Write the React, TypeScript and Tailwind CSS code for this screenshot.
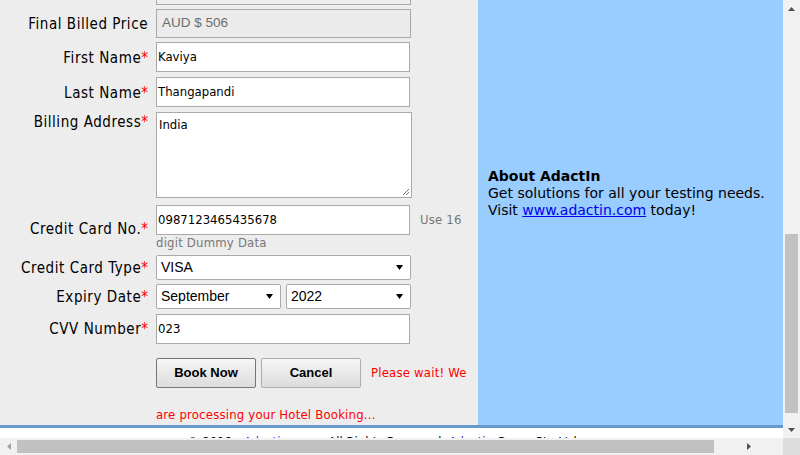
import React from "react";

const lbl = "font-['DejaVu_Sans_Condensed','DejaVu_Sans',sans-serif] text-[15px] tracking-[0.55px] text-black";
const val = "font-['DejaVu_Sans_Condensed','DejaVu_Sans',sans-serif] text-[13px] text-black";
const note = "font-['DejaVu_Sans_Condensed','DejaVu_Sans',sans-serif] text-[13px] tracking-[0.2px]";
const arial = "font-['Liberation_Sans',Arial,sans-serif]";

function Label({ text, req = true }: { text: string; req?: boolean }) {
  return (
    <span className={lbl}>
      {text}
      {req && <span className="text-[#ff0000] tracking-normal">*</span>}
    </span>
  );
}

function Caret() {
  return (
    <svg width="7" height="5" viewBox="0 0 7 5" className="shrink-0">
      <path d="M0 0H7L3.5 5Z" fill="#000" />
    </svg>
  );
}

function Select({ value, w }: { value: string; w: string }) {
  return (
    <div className={`${w} h-[25px] bg-white border border-[#a9a9a9] rounded-[2px] flex items-center pl-[4px] pr-[7px] justify-between`}>
      <span className={`${arial} text-[14px] text-black`}>{value}</span>
      <Caret />
    </div>
  );
}

function Input({ value }: { value: string }) {
  return (
    <div className="w-[254px] h-[30px] bg-white border border-[#a9a9a9] flex items-center pl-[1px]">
      <span className={val}>{value}</span>
    </div>
  );
}

export default function App() {
  return (
    <div className="w-[800px] h-[455px] overflow-hidden flex flex-col bg-white">
      <div className="flex h-[438px]">
        {/* page content */}
        <div className="w-[783px] flex flex-col overflow-hidden">
          <div className="flex h-[425px]">
            {/* left form */}
            <div className="w-[478px] bg-[#ededed] flex flex-col">
              <div className="flex">
                <div className="w-[148px]" />
                <div className="ml-[8px] w-[255px] h-[5px] border-x border-b border-[#a9a9a9]" />
              </div>

              <div className="flex items-center mt-[4px] h-[29px]">
                <div className="w-[148px] text-right">
                  <Label text="Final Billed Price" req={false} />
                </div>
                <div className="ml-[8px] w-[255px] h-[29px] bg-[#ebebeb] border border-[#a9a9a9] flex items-center pl-[5px]">
                  <span className={`${arial} text-[13.5px] text-[#6d6d6d]`}>AUD $ 506</span>
                </div>
              </div>

              <div className="flex items-center mt-[4px] h-[30px]">
                <div className="w-[148px] text-right"><Label text="First Name" /></div>
                <div className="ml-[8px]"><Input value="Kaviya" /></div>
              </div>

              <div className="flex items-center mt-[5px] h-[30px]">
                <div className="w-[148px] text-right"><Label text="Last Name" /></div>
                <div className="ml-[8px]"><Input value="Thangapandi" /></div>
              </div>

              <div className="flex items-start mt-[5px] h-[86px]">
                <div className="w-[148px] text-right leading-[18px]"><Label text="Billing Address" /></div>
                <div className={`ml-[8px] relative w-[256px] h-[86px] bg-white border border-[#a9a9a9] pl-[2px] pt-[4px] ${val} leading-[16px]`}>
                  India
                  <svg width="8" height="8" viewBox="0 0 8 8" className="absolute right-[1px] bottom-[1px]">
                    <path d="M7 1L1 7M7 4L4 7" stroke="#777" strokeWidth="1" />
                  </svg>
                </div>
              </div>

              <div className="flex items-center mt-[7px] h-[46px]">
                <div className="w-[148px] text-right"><Label text="Credit Card No." /></div>
                <div className="ml-[8px] flex flex-col h-[46px]">
                  <div className="flex items-center">
                    <Input value="0987123465435678" />
                    <span className={`${note} text-[#777] ml-[10px]`}>Use 16</span>
                  </div>
                  <span className={`${note} text-[#777] leading-[16px]`}>digit Dummy Data</span>
                </div>
              </div>

              <div className="flex items-center mt-[4px] h-[25px]">
                <div className="w-[148px] text-right"><Label text="Credit Card Type" /></div>
                <div className="ml-[8px]"><Select value="VISA" w="w-[255px]" /></div>
              </div>

              <div className="flex items-center mt-[4px] h-[25px]">
                <div className="w-[148px] text-right"><Label text="Expiry Date" /></div>
                <div className="ml-[8px] flex gap-[5px]">
                  <Select value="September" w="w-[125px]" />
                  <Select value="2022" w="w-[125px]" />
                </div>
              </div>

              <div className="flex items-center mt-[4px] h-[31px]">
                <div className="w-[148px] text-right"><Label text="CVV Number" /></div>
                <div className="ml-[8px]"><Input value="023" /></div>
              </div>

              <div className="flex flex-col mt-[14px] ml-[156px]">
                <div className="flex items-center h-[30px]">
                  <div className={`w-[100px] h-[30px] rounded-[2px] border border-[#767676] bg-gradient-to-b from-[#f6f6f6] to-[#dcdcdc] flex items-center justify-center ${arial} font-bold text-[13px] text-black`}>
                    Book Now
                  </div>
                  <div className={`ml-[5px] w-[100px] h-[30px] rounded-[2px] border border-[#adadad] bg-gradient-to-b from-[#f6f6f6] to-[#dcdcdc] flex items-center justify-center ${arial} font-bold text-[13px] text-black`}>
                    Cancel
                  </div>
                  <span className={`${note} text-[#ff0000] ml-[10px]`}>Please wait! We</span>
                </div>
                <span className={`${note} text-[#ff0000] mt-[19px] leading-[16px]`}>are processing your Hotel Booking...</span>
              </div>
            </div>

            {/* right blue panel */}
            <div className="flex-1 bg-[#99ccff] pl-[10px] pt-[168px] font-['DejaVu_Sans',Verdana,sans-serif] text-[14px] leading-[17px] text-black">
              <div className="font-bold">About AdactIn</div>
              <div>Get solutions for all your testing needs.</div>
              <div>
                Visit <span className="text-[#0000ee] underline">www.adactin.com</span> today!
              </div>
            </div>
          </div>
          <div className="h-[3px] bg-[#6699cc]" />
          <div className="flex-1 bg-white overflow-hidden pl-[187px] pt-[6px]">
            <div className={`${val} leading-[16px] whitespace-nowrap`}>
              © 2018 - <span className="text-[#3333ee]">Adactin.com</span> - All Rights Reserved. <span className="text-[#551a8b]">Adactin</span> Group Pty Ltd
            </div>
          </div>
        </div>

        {/* vertical scrollbar */}
        <div className="w-[17px] bg-[#f1f1f1] flex flex-col">
          <div className="h-[17px] flex items-center justify-center">
            <svg width="7" height="4" viewBox="0 0 7 4"><path d="M3.5 0L7 4H0Z" fill="#505050" /></svg>
          </div>
          <div className="flex-1 flex flex-col px-[2px]">
            <div className="mt-[217px] h-[179px] bg-[#c1c1c1]" />
          </div>
          <div className="h-[17px] flex items-center justify-center">
            <svg width="7" height="4" viewBox="0 0 7 4"><path d="M0 0H7L3.5 4Z" fill="#505050" /></svg>
          </div>
        </div>
      </div>

      {/* horizontal scrollbar */}
      <div className="flex h-[17px]">
        <div className="w-[783px] bg-[#f1f1f1] flex items-center">
          <div className="w-[17px] flex items-center justify-center">
            <svg width="4" height="7" viewBox="0 0 4 7"><path d="M4 0V7L0 3.5Z" fill="#a3a3a3" /></svg>
          </div>
          <div className="w-[697px] h-[13px] bg-[#c1c1c1]" />
          <div className="flex-1 flex items-center justify-center">
            <svg width="4" height="7" viewBox="0 0 4 7"><path d="M0 0V7L4 3.5Z" fill="#505050" /></svg>
          </div>
        </div>
        <div className="w-[17px] bg-[#dcdcdc]" />
      </div>
    </div>
  );
}
